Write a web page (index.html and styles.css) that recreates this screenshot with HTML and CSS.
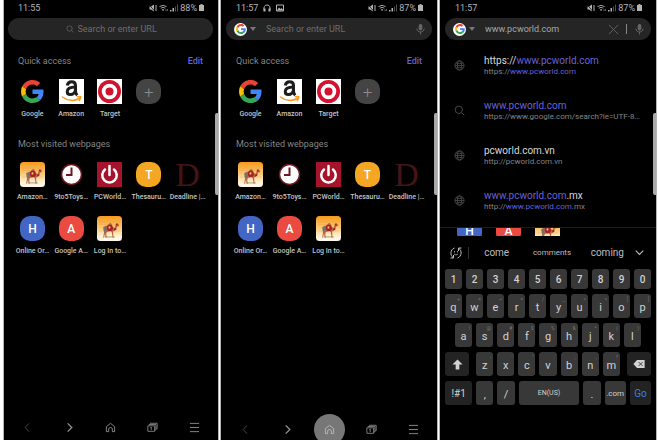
FILE: index.html
```html
<!DOCTYPE html>
<html lang="en">
<head>
<meta charset="utf-8">
<meta name="viewport" content="width=device-width, initial-scale=1">
<title>Mobile browser</title>
<link rel="stylesheet" href="styles.css">
</head>
<body>
<svg class="sprite" aria-hidden="true">
  <defs>
    <linearGradient id="sky" x1="0" y1="0" x2="0" y2="1">
      <stop offset="0" stop-color="#f79a1c"/><stop offset=".45" stop-color="#fbc670"/><stop offset=".8" stop-color="#fff0d2"/><stop offset="1" stop-color="#fffaf0"/>
    </linearGradient>
  </defs>
  <symbol id="google" viewBox="0 0 48 48">
    <path fill="#ea4335" d="M24 9.500c3.500 0 6.700 1.200 9.200 3.600l6.900-6.900C35.900 2.400 30.500 0 24 0 14.600 0 6.500 5.400 2.600 13.200l8 6.200C12.400 13.700 17.700 9.500 24 9.500z"/>
    <path fill="#4285f4" d="M47 24.600c0-1.600-.2-3.100-.4-4.600H24v9h12.900c-.6 3-2.200 5.500-4.700 7.200l7.700 6C44.400 38 47 31.800 47 24.600z"/>
    <path fill="#fbbc05" d="M10.500 28.600c-.5-1.500-.8-3-.8-4.600s.3-3.100.8-4.600l-8-6.200C.9 16.500 0 20.100 0 24s.9 7.500 2.600 10.800z"/>
    <path fill="#34a853" d="M24 48c6.500 0 11.900-2.100 15.900-5.800l-7.700-6c-2.200 1.500-4.900 2.300-8.200 2.300-6.300 0-11.600-4.200-13.500-9.900l-7.900 6.200C6.500 42.600 14.600 48 24 48z"/>
  </symbol>
  <symbol id="amazon" viewBox="0 0 50 50">
    <path fill="#fff" d="M0 0h50v50H0z"/>
    <path fill="none" stroke="#1d1d1d" stroke-width="6" d="M16.500 13c1-5 4-7.500 8.500-7.500 5.500 0 8 2.500 8 7.500v12c0 3.500 1 5 3.500 7.500"/>
    <path fill="none" stroke="#1d1d1d" stroke-width="6" d="M33 16c-11 0-16.500 3-16.500 9 0 4 2.200 6.200 6 6.200C28 31.200 33 27 33 20"/>
    <path fill="none" stroke="#f79a1c" stroke-width="3" stroke-linecap="round" d="M7 36c10 8 24 9 34 2.500M37 35.500c5-1 7-.5 6.500 1s-1.500 5-3 6.500"/>
  </symbol>
  <symbol id="target" viewBox="0 0 50 50">
    <path fill="#fff" d="M0 0h50v50H0z"/><circle cx="25" cy="25" r="23" fill="#d3122f"/><circle cx="25" cy="25" r="15.500" fill="#fff"/><circle cx="25" cy="25" r="8" fill="#d3122f"/>
  </symbol>
  <symbol id="camel" viewBox="0 0 50 50">
    <rect width="50" height="50" rx="7" fill="url(#sky)"/>
    <path stroke="#dfa04a" stroke-width="1" opacity=".6" d="M4 12h42M4 17h42M4 30h42"/>
    <g transform="translate(3 4) scale(.86)">
      <path fill="#b5653f" d="M13 22c2-4 5-5 8-3l3-5c2-3 5-3 7 1l3 6 3 2 2-3 1-5c1-2 3-2 5-1l3 2-1 3-4 1-2 6c-1 3-3 4-6 4l-1 4 1 12h-2l-2-12-2-3-8 1-3 3 1 11h-2l-2-10-2 10h-2l2-14c-1-4 0-7 1-10z"/>
      <path fill="#a71f2b" d="M20 18l4-3 7 2 3 8-4 5h-7l-4-5zM36 25l5-2 1 4-5 2zM41 13l4 0-1 5-3-1z"/>
      <path fill="#727174" d="M11 21l7-2 1 11-7 1z"/><path fill="#f4c15a" d="M24 19l4 1-1 5-4-1z"/>
      <path stroke="#8a6a48" stroke-width="1.500" d="M15 44h23"/>
    </g>
  </symbol>
  <symbol id="clock" viewBox="0 0 50 50">
    <circle cx="25" cy="25" r="20" fill="#fff" stroke="#6d1720" stroke-width="3"/><path fill="none" stroke="#6d1720" stroke-width="4" d="M25 11v15H14"/>
  </symbol>
  <symbol id="power" viewBox="0 0 50 50">
    <path fill="#a5142b" d="M0 0h50v50H0z"/><path fill="none" stroke="#fff" stroke-width="5" stroke-linecap="round" d="M25 8v18M16 15a14.500 14.500 0 1 0 18 0"/>
  </symbol>
  <symbol id="globe" viewBox="0 0 24 24"><g fill="none" stroke="currentColor" stroke-width="1.800"><circle cx="12" cy="12" r="10"/><ellipse cx="12" cy="12" rx="4.500" ry="10"/><path d="M2 12h20M4 6.500q8 3 16 0M4 17.500q8-3 16 0"/></g></symbol>
  <symbol id="lens" viewBox="0 0 24 24"><g fill="none" stroke="currentColor" stroke-width="2"><circle cx="10.500" cy="10.500" r="8"/><path d="M16.500 16.500l6 6"/></g></symbol>
  <symbol id="mic" viewBox="0 0 24 24"><rect x="8" y="1" width="8" height="14" rx="4" fill="currentColor"/><path fill="none" stroke="currentColor" stroke-width="2" d="M4 11c0 10 16 10 16 0M12 18v6"/></symbol>
  <symbol id="mute" viewBox="0 0 16 16"><path fill="currentColor" d="M1 5h3l6-4v14l-6-4H1z"/><path stroke="currentColor" stroke-width="2" d="M14 2v12"/><path stroke="#000" stroke-width="1.500" d="M1 2l10 12"/></symbol>
  <symbol id="wifi" viewBox="0 0 20 16"><g fill="none" stroke="currentColor" stroke-width="2"><path d="M1 5q8-6 16 0M4 8.500q5-4 10 0"/></g><circle cx="9" cy="12" r="2" fill="currentColor"/><path fill="currentColor" d="M15 15v-5l2 3zM18 10v5l2-3z"/></symbol>
  <symbol id="signal" viewBox="0 0 16 16"><path fill="currentColor" d="M0 15h3v-3H0z"/><path fill="currentColor" d="M5 15h3V8H5z"/><path fill="currentColor" opacity=".45" d="M10 15h2V5h-2zM14 15h2V1h-2z"/></symbol>
  <symbol id="battery" viewBox="0 0 10 14"><path fill="currentColor" d="M3 0h4v2h3v12H0V2h3z"/></symbol>
  <symbol id="headset" viewBox="0 0 16 16"><path fill="none" stroke="currentColor" stroke-width="2" d="M2 12V8c0-8 12-8 12 0v4"/><path fill="currentColor" d="M1 9h4v6H1zM11 9h4v6h-4z"/></symbol>
  <symbol id="photo" viewBox="0 0 16 16"><path fill="none" stroke="currentColor" stroke-width="2" d="M1 2h14v12H1z"/><path fill="currentColor" d="M2 13l4-6 3 3 2-2 4 5z"/></symbol>
  <symbol id="back" viewBox="0 0 24 24"><path fill="none" stroke="currentColor" stroke-width="2" d="M15 3l-8 9 8 9"/></symbol>
  <symbol id="forward" viewBox="0 0 24 24"><path fill="none" stroke="currentColor" stroke-width="3" d="M8 3l9 9-9 9"/></symbol>
  <symbol id="home" viewBox="0 0 24 24"><path fill="none" stroke="currentColor" stroke-width="2" d="M3 10l9-7 9 7v11h-5v-6c0-4-8-4-8 0v6H3z"/></symbol>
  <symbol id="tabs" viewBox="0 0 26 24"><path fill="none" stroke="currentColor" stroke-width="2" d="M2 8h16v13H2zM5 7V5h16v13h-2M8 4V2h16v13h-2M8 12l2-1v7"/></symbol>
  <symbol id="menu" viewBox="0 0 24 24"><path stroke="currentColor" stroke-width="2" d="M2 3h20M2 12h20M2 21h20"/></symbol>
  <symbol id="cross" viewBox="0 0 24 24"><path stroke="currentColor" stroke-width="2" d="M2 2l20 20M22 2L2 22"/></symbol>
  <symbol id="sticker" viewBox="0 0 24 24"><g fill="none" stroke="currentColor" stroke-width="2"><path d="M9 2C0 5 0 17 6 21M1 22h6v-6M15 22c9-3 9-15 3-19M23 2h-6v6"/><path d="M8 14q4 4 8 0M9 8v3M15 8v3" stroke-width="1.500"/></g></symbol>
  <symbol id="down" viewBox="0 0 24 24"><path fill="none" stroke="currentColor" stroke-width="3" d="M2 7l10 10L22 7"/></symbol>
  <symbol id="shift" viewBox="0 0 24 24"><path fill="currentColor" d="M12 1l11 11h-7v11H8V12H1z"/></symbol>
  <symbol id="erase" viewBox="0 0 28 20"><path fill="currentColor" d="M9 0h19v20H9L0 10z"/><path stroke="#222" stroke-width="2" d="M13 5l10 10M23 5L13 15"/></symbol>
</svg>

<main class="screens">
  <section class="phone phone-first" aria-label="Start page">
    <header class="status"><span>11:55</span><span class="status-end"><svg class="s-icon"><use href="#mute"/></svg><svg class="s-icon wide"><use href="#wifi"/></svg><svg class="s-icon"><use href="#signal"/></svg><span>88%</span><svg class="s-battery"><use href="#battery"/></svg></span></header>
    <form class="omnibox idle"><svg class="lens"><use href="#lens"/></svg><input type="text" aria-label="Search or enter URL" placeholder="Search or enter URL"></form>
    <div class="heading"><h2>Quick access</h2><button type="button" class="edit">Edit</button></div>
    <nav class="tiles" aria-label="Quick access">
      <a class="tile" href="#"><svg class="pic inset"><use href="#google"/></svg><span>Google</span></a>
      <a class="tile" href="#"><svg class="pic"><use href="#amazon"/></svg><span>Amazon</span></a>
      <a class="tile" href="#"><svg class="pic"><use href="#target"/></svg><span>Target</span></a>
      <button type="button" class="tile" aria-label="Add"><i class="pic badge add">+</i></button>
    </nav>
    <div class="heading second"><h2>Most visited webpages</h2></div>
    <nav class="tiles visited" aria-label="Most visited webpages">
      <a class="tile" href="#"><svg class="pic"><use href="#camel"/></svg><span>Amazon…</span></a>
      <a class="tile" href="#"><svg class="pic"><use href="#clock"/></svg><span>9to5Toys…</span></a>
      <a class="tile" href="#"><svg class="pic"><use href="#power"/></svg><span>PCWorld…</span></a>
      <a class="tile" href="#"><i class="pic badge amber">T</i><span>Thesauru…</span></a>
      <a class="tile" href="#"><i class="pic serif">D</i><span>Deadline |…</span></a>
      <a class="tile" href="#"><i class="pic badge blue">H</i><span>Online Or…</span></a>
      <a class="tile" href="#"><i class="pic badge red">A</i><span>Google A…</span></a>
      <a class="tile" href="#"><svg class="pic"><use href="#camel"/></svg><span>Log In to…</span></a>
    </nav>
    <footer class="toolbar">
      <button type="button" class="dim" aria-label="Back"><svg><use href="#back"/></svg></button>
      <button type="button" aria-label="Forward"><svg><use href="#forward"/></svg></button>
      <button type="button" aria-label="Home"><svg><use href="#home"/></svg></button>
      <button type="button" aria-label="Tabs"><svg><use href="#tabs"/></svg></button>
      <button type="button" aria-label="Menu"><svg><use href="#menu"/></svg></button>
    </footer>
    <div class="edge-handle"></div>
  </section>

  <section class="phone" aria-label="Address bar focused">
    <header class="status"><span class="status-start"><span>11:57</span><svg class="s-icon"><use href="#headset"/></svg><svg class="s-icon"><use href="#photo"/></svg></span><span class="status-end"><svg class="s-icon"><use href="#mute"/></svg><svg class="s-icon wide"><use href="#wifi"/></svg><svg class="s-icon"><use href="#signal"/></svg><span>87%</span><svg class="s-battery"><use href="#battery"/></svg></span></header>
    <form class="omnibox"><button type="button" class="engine" aria-label="Search engine"><span class="disc"><svg><use href="#google"/></svg></span><i class="caret"></i></button><input type="text" aria-label="Search or enter URL" placeholder="Search or enter URL"><button type="button" aria-label="Voice search"><svg class="mic"><use href="#mic"/></svg></button></form>
    <div class="heading"><h2>Quick access</h2><button type="button" class="edit">Edit</button></div>
    <nav class="tiles" aria-label="Quick access">
      <a class="tile" href="#"><svg class="pic inset"><use href="#google"/></svg><span>Google</span></a>
      <a class="tile" href="#"><svg class="pic"><use href="#amazon"/></svg><span>Amazon</span></a>
      <a class="tile" href="#"><svg class="pic"><use href="#target"/></svg><span>Target</span></a>
      <button type="button" class="tile" aria-label="Add"><i class="pic badge add">+</i></button>
    </nav>
    <div class="heading second"><h2>Most visited webpages</h2></div>
    <nav class="tiles visited" aria-label="Most visited webpages">
      <a class="tile" href="#"><svg class="pic"><use href="#camel"/></svg><span>Amazon…</span></a>
      <a class="tile" href="#"><svg class="pic"><use href="#clock"/></svg><span>9to5Toys…</span></a>
      <a class="tile" href="#"><svg class="pic"><use href="#power"/></svg><span>PCWorld…</span></a>
      <a class="tile" href="#"><i class="pic badge amber">T</i><span>Thesauru…</span></a>
      <a class="tile" href="#"><i class="pic serif">D</i><span>Deadline |…</span></a>
      <a class="tile" href="#"><i class="pic badge blue">H</i><span>Online Or…</span></a>
      <a class="tile" href="#"><i class="pic badge red">A</i><span>Google A…</span></a>
      <a class="tile" href="#"><svg class="pic"><use href="#camel"/></svg><span>Log In to…</span></a>
    </nav>
    <footer class="toolbar">
      <button type="button" class="dim" aria-label="Back"><svg><use href="#back"/></svg></button>
      <button type="button" aria-label="Forward"><svg><use href="#forward"/></svg></button>
      <button type="button" class="pressed" aria-label="Home"><svg><use href="#home"/></svg></button>
      <button type="button" aria-label="Tabs"><svg><use href="#tabs"/></svg></button>
      <button type="button" aria-label="Menu"><svg><use href="#menu"/></svg></button>
    </footer>
    <div class="edge-handle"></div>
  </section>

  <section class="phone" aria-label="Address suggestions">
    <header class="status"><span>11:57</span><span class="status-end"><svg class="s-icon"><use href="#mute"/></svg><svg class="s-icon wide"><use href="#wifi"/></svg><svg class="s-icon"><use href="#signal"/></svg><span>87%</span><svg class="s-battery"><use href="#battery"/></svg></span></header>
    <form class="omnibox"><button type="button" class="engine" aria-label="Search engine"><span class="disc"><svg><use href="#google"/></svg></span><i class="caret"></i></button><input type="text" aria-label="Search or enter URL" value="www.pcworld.com"><button type="button" aria-label="Clear"><svg class="cross"><use href="#cross"/></svg></button><i class="divider"></i><button type="button" aria-label="Voice search"><svg class="mic"><use href="#mic"/></svg></button></form>
    <nav class="results" aria-label="Suggestions">
      <a href="#"><svg><use href="#globe"/></svg><span><strong>https://<b>www.pcworld.com</b></strong><small>https://<b>www.pcworld.com</b></small></span></a>
      <a href="#"><svg><use href="#lens"/></svg><span><strong><b>www.pcworld.com</b></strong><small>https://www.google.com/search?ie=UTF-8…</small></span></a>
      <a href="#"><svg><use href="#globe"/></svg><span><strong>pcworld.com.vn</strong><small>http://pcworld.com.vn</small></span></a>
      <a href="#"><svg><use href="#globe"/></svg><span><strong><b>www.pcworld.com</b>.mx</strong><small>http://<b>www.pcworld.com</b>.mx</small></span></a>
    </nav>
    <div class="tiles peek"><i class="pic badge blue">H</i><i class="pic badge red">A</i><svg class="pic"><use href="#camel"/></svg></div>
    <div class="predictions"><button type="button" aria-label="Stickers"><svg class="sticker"><use href="#sticker"/></svg></button><i class="divider"></i><button type="button" class="word">come</button><button type="button" class="word minor">comments</button><button type="button" class="word">coming</button><button type="button" aria-label="More"><svg class="more"><use href="#down"/></svg></button></div>
    <div class="keyboard">
      <div class="keys digits"><button>1</button><button>2</button><button>3</button><button>4</button><button>5</button><button>6</button><button>7</button><button>8</button><button>9</button><button>0</button></div>
      <div class="keys"><button>q<sup>+</sup></button><button>w<sup>×</sup></button><button>e<sup>÷</sup></button><button>r<sup>=</sup></button><button>t<sup>/</sup></button><button>y<sup>_</sup></button><button>u<sup>&lt;</sup></button><button>i<sup>&gt;</sup></button><button>o<sup>[</sup></button><button>p<sup>]</sup></button></div>
      <div class="keys home-row"><button>a<sup>!</sup></button><button>s<sup>@</sup></button><button>d<sup>#</sup></button><button>f<sup>$</sup></button><button>g<sup>%</sup></button><button>h<sup>&amp;</sup></button><button>j<sup>*</sup></button><button>k<sup>(</sup></button><button>l<sup>)</sup></button></div>
      <div class="keys lower-row"><button class="dark" aria-label="Shift"><svg class="shift"><use href="#shift"/></svg></button><div class="keys"><button>z<sup>-</sup></button><button>x<sup>'</sup></button><button>c<sup>"</sup></button><button>v<sup>:</sup></button><button>b<sup>;</sup></button><button>n<sup>,</sup></button><button>m<sup>?</sup></button></div><button class="dark" aria-label="Backspace"><svg class="erase"><use href="#erase"/></svg></button></div>
      <div class="keys space-row"><button class="dark symbols">!#1</button><button>,</button><button>/</button><button class="space">EN(US)</button><button>.</button><button class="com">.com</button><button class="dark go">Go</button></div>
    </div>
    <div class="edge-handle"></div>
  </section>
</main>
</body>
</html>
```
FILE: styles.css
```css
* { box-sizing: border-box; }

body {
  margin: 0;
  background: #fff;
  font-family: Roboto, "Liberation Sans", sans-serif;
}

button, input {
  margin: 0;
  padding: 0;
  border: 0;
  background: none;
  color: inherit;
  font: inherit;
  outline: 0;
}

a { color: inherit; text-decoration: none; }
i { font-style: normal; }
svg { display: block; flex: none; }
.sprite { position: absolute; width: 0; height: 0; }

.screens {
  display: grid;
  grid-template-columns: 214fr 216fr 216fr;
  gap: 3px;
  min-height: 100vh;
  padding: 0 4px;
}

.phone {
  --shift: 0px;
  position: relative;
  display: flex;
  flex-direction: column;
  min-width: 0;
  overflow: hidden;
  background: #000;
  color: #d0d0d0;
  box-shadow: 0 0 0 1px #b4b4b4;
}
.phone-first { --shift: 1px; }

.edge-handle {
  position: absolute;
  top: 113px;
  right: 0;
  width: 3px;
  height: 82px;
  border-radius: 2px 0 0 2px;
  background: #aaa;
}

/* Status bar */
.status {
  display: flex;
  justify-content: space-between;
  align-items: center;
  height: 15px;
  padding: 0 14px 0 calc(15px - var(--shift));
  font-size: 9px;
  color: #b4b4b4;
}
.status-start, .status-end { display: flex; align-items: center; gap: 2px; }
.status-start { gap: 5px; }
.s-icon { width: 8px; height: 8px; }
.s-icon.wide { width: 9px; }
.s-battery { width: 5px; height: 7px; }

/* Address bar */
.omnibox {
  display: flex;
  align-items: center;
  height: 22px;
  margin: 3px 5px 0 calc(5px - var(--shift));
  padding: 0 6px 0 8px;
  border-radius: 11px;
  background: #252525;
  color: #a8a8a8;
  font-size: 9px;
}
.omnibox input { flex: 1; min-width: 0; height: 16px; }
.omnibox input::placeholder { color: #6e6e6e; opacity: 1; }
.omnibox.idle { justify-content: center; gap: 4px; }
.omnibox.idle input { flex: 0 0 80px; }
.lens { width: 8px; height: 8px; color: #6e6e6e; }
.engine { display: flex; align-items: center; gap: 3px; width: 32px; }
.disc { display: grid; place-items: center; width: 13px; height: 13px; border-radius: 50%; background: #fff; }
.disc svg { width: 10px; height: 10px; }
.caret { border: 3px solid transparent; border-top: 4px solid #777; border-bottom: 0; }
.mic { width: 11px; height: 12px; color: #666; }
.cross { width: 11px; height: 11px; color: #666; }
.divider { width: 1px; height: 10px; margin: 0 7px; background: #888; }

/* Start page */
.heading {
  display: flex;
  justify-content: space-between;
  align-items: center;
  height: 12px;
  margin-top: 15px;
  padding: 0 15px 0 calc(15px - var(--shift));
  font-size: 9px;
}
.heading.second { margin-top: 19px; }
.heading h2 { margin: 0; font-size: 9px; font-weight: 400; color: #858585; }
.edit { color: #6862d8; font-weight: 500; }

.tiles {
  display: grid;
  grid-template-columns: repeat(5, 1fr);
  row-gap: 14px;
  margin-top: 12px;
  padding: 0 11px 0 calc(10px - var(--shift));
}
.tile { display: flex; flex-direction: column; align-items: center; gap: 5px; min-width: 0; height: 40px; }
.tile span { font-size: 7px; line-height: 10px; font-weight: 500; white-space: nowrap; color: #c4c4c4; }
.pic { flex: none; width: 25px; height: 25px; }
.pic.inset { padding: 1px; }
.badge { display: grid; place-items: center; border-radius: 10px; color: #fff; font-size: 12px; font-weight: 500; }
.add { background: #444; color: #8a8a8a; font-size: 17px; font-weight: 300; }
.amber { background: #f5a623; }
.blue { background: #4366c5; }
.red { background: #ea4a3f; }
.serif { display: grid; place-items: center; color: #441417; font: 34px/25px "Liberation Serif", serif; }

/* Bottom toolbar */
.toolbar {
  display: grid;
  grid-template-columns: repeat(5, 1fr);
  height: 26px;
  margin-top: auto;
  padding: 0 3px;
  overflow: hidden;
  color: #8e8e8e;
}
.toolbar button { display: grid; place-items: center; }
.toolbar svg { width: 11px; height: 11px; }
.toolbar .dim { color: #4c4c4c; }
.toolbar .pressed { justify-self: center; align-self: center; width: 31px; height: 31px; border-radius: 50%; background: #777; color: #bbb; }

/* Suggestions */
.results { padding: 2px 10px 5px 14px; border-bottom: 1px solid #1c1c1c; }
.results a { display: flex; align-items: center; gap: 19px; padding-top: 1px; height: 45px; }
.results svg { width: 11px; height: 11px; margin-top: 1px; color: #4e4e4e; }
.results span { display: grid; min-width: 0; }
.results strong { color: #d8d8d8; font-size: 10px; line-height: 13px; font-weight: 400; }
.results small { color: #858585; font-size: 8px; line-height: 10px; white-space: nowrap; }
.results b { color: #6862d8; font-weight: 400; }

.peek { height: 8px; margin: 0; overflow: hidden; justify-items: center; }
.peek .pic { margin-top: -10px; }

/* Keyboard */
.predictions { display: flex; align-items: center; height: 33px; padding: 0 12px 0 10px; font-size: 10px; color: #bdbdbd; }
.predictions .divider { height: 12px; margin: 0; background: #333; }
.predictions .word { flex: 1; }
.predictions .minor { font-size: 8px; }
.sticker { width: 12px; height: 12px; margin-right: 6px; }
.more { width: 9px; height: 9px; }

.keyboard { display: grid; gap: 5px; padding: 0 5px; margin-bottom: 33px; }
.keys { display: grid; grid-auto-flow: column; grid-auto-columns: minmax(0, 1fr); gap: 4px; height: 24px; }
.keys button { position: relative; border-radius: 3px; background: #383838; color: #d2d2d2; font-size: 11px; line-height: 13px; padding-top: 3px; }
.digits { height: 20px; }
.keys.digits button { padding: 0; font-weight: 500; font-size: 10px; }
.keys sup { position: absolute; top: 1px; right: 2px; color: #777; font-size: 5px; line-height: 8px; }
.home-row { padding: 0 10px; }
.lower-row { grid-template-columns: 24fr 143fr 24fr; gap: 7px; }
.space-row { grid-template-columns: 27fr 17fr 17fr 60fr 17fr 21fr 21fr; }
.keys .dark { display: grid; place-items: center; padding: 0; background: #232323; }
.shift { width: 11px; height: 11px; }
.erase { width: 12px; height: 8px; }
.keys .symbols { font-size: 10px; }
.keys .space, .keys .com { padding: 0; font-size: 8px; }
.keys .space { font-size: 7px; }
.keys .go { color: #3c7fe0; font-size: 10px; }
```
